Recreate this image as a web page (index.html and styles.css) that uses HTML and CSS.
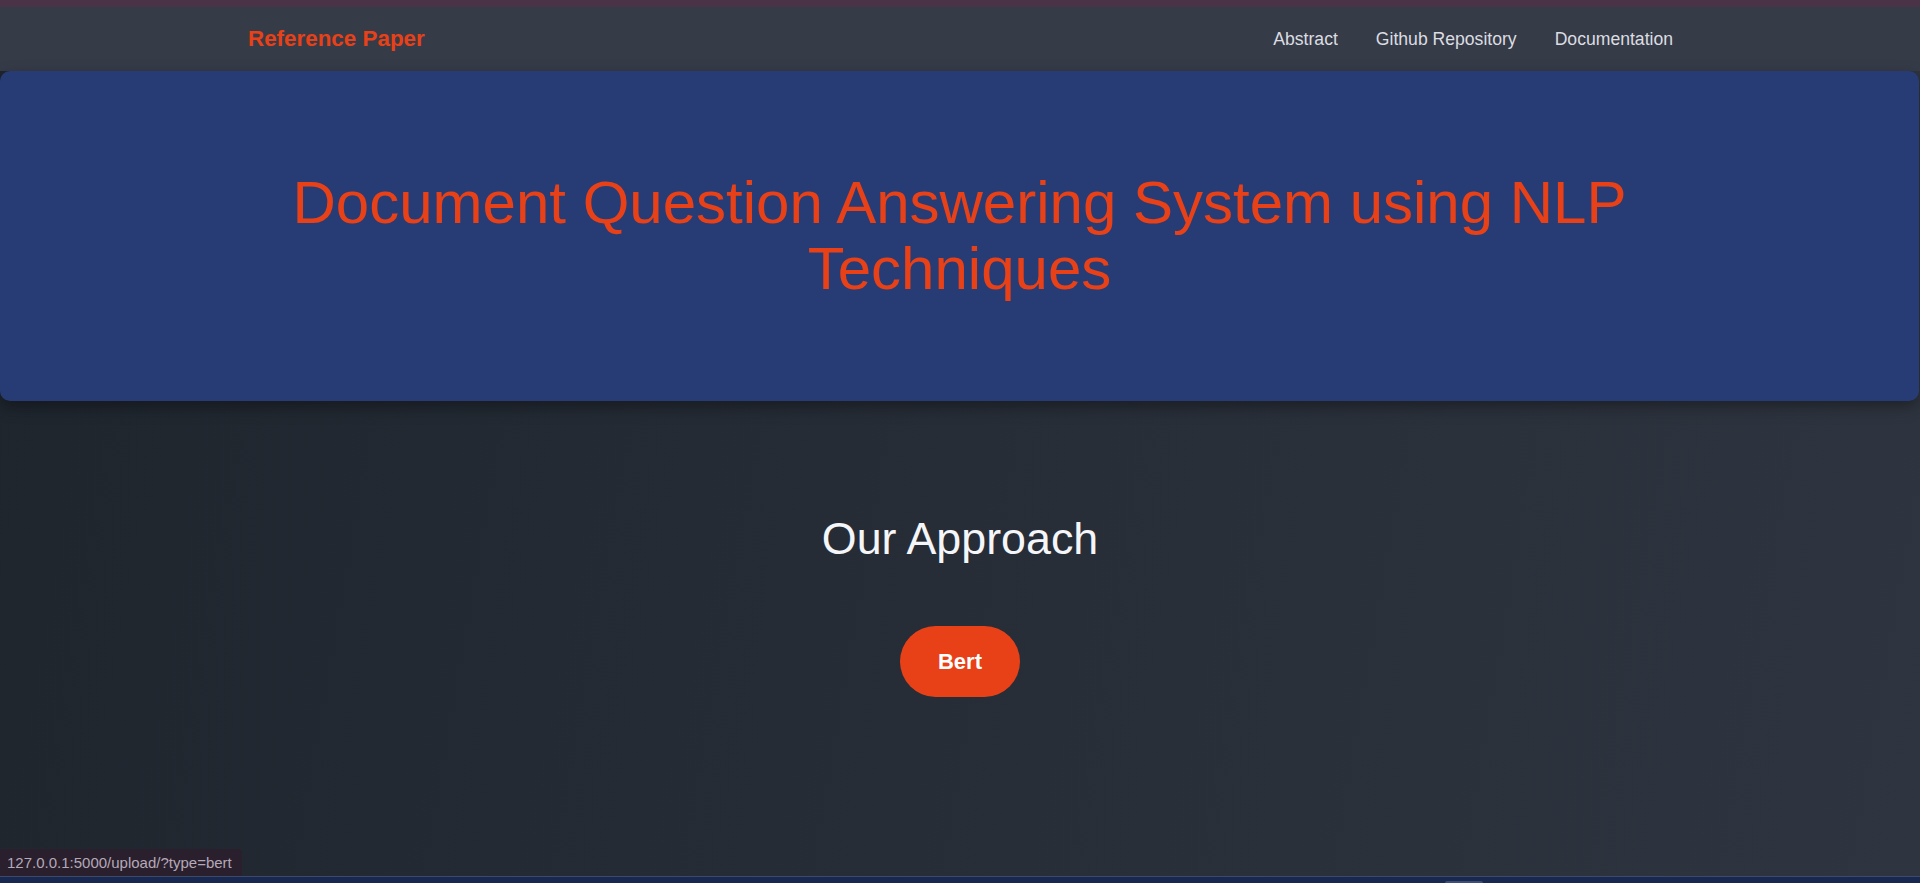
FILE: index.html
```html
<!DOCTYPE html>
<html lang="en">
<head>
<meta charset="utf-8">
<title>Document Question Answering System</title>
<link rel="stylesheet" href="styles.css">
</head>
<body>
<div class="topline"></div>
<nav class="navbar">
  <a class="brand" href="#">Reference Paper</a>
  <ul class="links">
    <li><a href="#">Abstract</a></li>
    <li><a href="#">Github Repository</a></li>
    <li><a href="#">Documentation</a></li>
  </ul>
</nav>
<header class="hero">
  <h1 class="hero-title">Document Question Answering System using NLP Techniques</h1>
</header>
<section class="approach">
  <h2 class="approach-title">Our Approach</h2>
  <a class="btn" href="#">Bert</a>
</section>
<div class="status">127.0.0.1:5000/upload/?type=bert</div>
<div class="taskbar"><span class="thumb"></span></div>
</body>
</html>
```

FILE: styles.css
```css
* { box-sizing: border-box; }
html, body { height: 100%; }
body {
  margin: 0;
  font-family: "Liberation Sans", Arial, sans-serif;
  background: linear-gradient(100deg, #1e252d 0%, #2f3540 100%);
  color: #f5f6fa;
  overflow: hidden;
}
.topline { height: 7px; background: #4a3347; }
.navbar {
  height: 64px;
  background: #363b48;
  display: flex;
  align-items: center;
  justify-content: space-between;
  padding: 0 247px 0 248px;
}
.brand {
  font-weight: bold;
  font-size: 22.4px;
  color: #e84118;
  text-decoration: none;
}
.links {
  list-style: none;
  margin: 0;
  padding: 0;
  display: flex;
  gap: 38px;
}
.links a {
  font-size: 17.6px;
  color: #dcdde1;
  text-decoration: none;
}
.hero {
  height: 330px;
  background: #273c75;
  border-radius: 10px;
  box-shadow: 0 6px 16px rgba(0, 0, 0, 0.35);
  display: flex;
  align-items: center;
  justify-content: center;
  margin-right: 1px;
}
.hero-title {
  margin: 0;
  max-width: 1440px;
  font-size: 60px;
  font-weight: normal;
  line-height: 66px;
  color: #e84118;
  text-align: center;
}
.approach {
  padding-top: 111px;
  display: flex;
  flex-direction: column;
  align-items: center;
}
.approach-title {
  margin: 0;
  font-size: 44.8px;
  font-weight: normal;
  line-height: 52px;
  color: #f5f6fa;
}
.btn {
  margin-top: 62px;
  padding: 22px 38px;
  font-size: 22px;
  line-height: 27px;
  font-weight: bold;
  color: #ffffff;
  background: #e84118;
  border-radius: 40px;
  text-decoration: none;
}
.status {
  position: fixed;
  left: 0;
  bottom: 7px;
  height: 27px;
  padding: 0 10px 0 7px;
  background: #2a1f2c;
  border-top-right-radius: 4px;
  color: #b4a9b8;
  font-size: 15px;
  line-height: 27px;
}
.taskbar {
  position: fixed;
  left: 0;
  right: 0;
  bottom: 0;
  height: 7px;
  background: #182850;
  border-top: 1px solid #3c4a66;
}
.thumb {
  position: absolute;
  left: 1445px;
  bottom: 0;
  width: 38px;
  height: 2px;
  background: #3c4d78;
  border-radius: 2px 2px 0 0;
}
```
